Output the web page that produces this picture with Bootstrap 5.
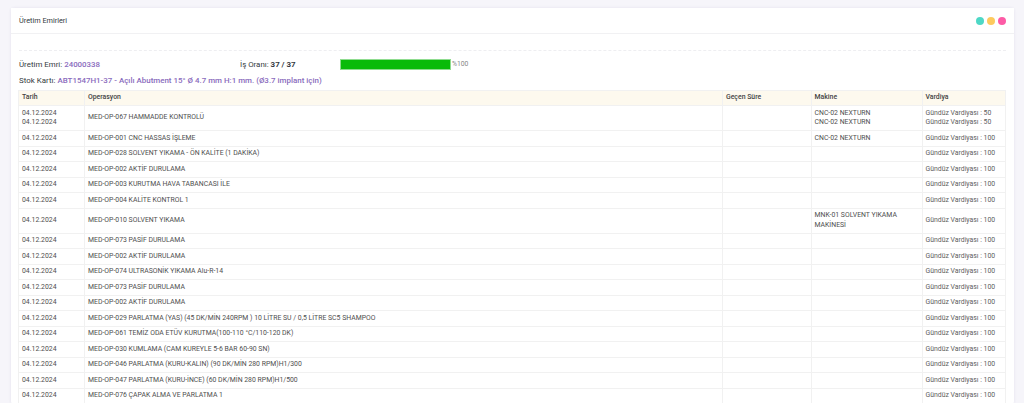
<!DOCTYPE html>
<html lang="tr"><head><meta charset="utf-8">
<link href="https://cdn.jsdelivr.net/npm/bootstrap@5.3.0/dist/css/bootstrap.min.css" rel="stylesheet">
<style>
html,body{height:403px;overflow:hidden}
body{background:#f6f5fa;font-family:Roboto,"Liberation Sans",sans-serif;font-size:7.4px;color:#212529;padding:8px 10px 0 11px}
.sheet{background:#fff;border:0;border-radius:3px;box-shadow:0 0 3px rgba(60,50,120,.10)}
.sheet-head{height:26px;padding:1px 8px 0;border-bottom:1px solid #f1f1f3;background:#fff;font-size:7.3px;color:#343a40}
.dot{width:8px;height:8px;border-radius:50%;display:block}
.dots{gap:3px}
.sheet-body{padding:16px 8px 0}
.dash{border-top:1px dashed #eeeef1;height:0;margin-bottom:5.5px}
.info{height:16px;font-size:7.9px;color:#343a40}
.info-a{width:221px}.info-b{width:100px}
.violet{color:#8a6bbd;font-weight:500}
.barbox{width:111px;height:11px;background:#0abb0a;border:1px solid #8fdc8f}
.pct{color:#888;font-size:6.8px;margin-left:1px}
.stok{height:17px;font-size:7.94px;color:#343a40}
.ops{table-layout:fixed;width:987.5px;border-collapse:collapse;margin:0 0 0 -1px;font-size:6.88px;line-height:9.5px;color:#4f4f4f}
.ops th,.ops td{border:1px solid #f1f1f1;padding:2.5px 3px;vertical-align:middle;background:#fff;color:#4f4f4f;box-shadow:none}
.ops th{background:#fdf9ee;font-weight:500;color:#444}
.w1{width:66px}.w2{width:638px}.w3{width:88.5px}.w4{width:111px}
.ops td.vard{color:#606060}
</style></head><body>
<div class="sheet">
  <div class="sheet-head d-flex align-items-center justify-content-between">
    <span>Üretim Emirleri</span>
    <span class="d-flex dots"><i class="dot" style="background:#4ed8c6"></i><i class="dot" style="background:#fdca5e"></i><i class="dot" style="background:#fd5ba6"></i></span>
  </div>
  <div class="sheet-body">
    <div class="dash"></div>
    <div class="info d-flex align-items-center">
      <div class="info-a">Üretim Emri: <span class="violet">24000338</span></div>
      <div class="info-b">İş Oranı: <b>37 / 37</b></div>
      <div class="d-flex align-items-center"><div class="barbox"></div><span class="pct">%100</span></div>
    </div>
    <div class="stok d-flex align-items-center"><div>Stok Kartı: <span class="violet">ABT1547H1-37 - Açılı Abutment 15° Ø 4.7 mm H:1 mm. (Ø3.7 implant için)</span></div></div>
    <table class="table ops">
      <thead><tr><th class="w1">Tarih</th><th class="w2">Operasyon</th><th class="w3">Geçen Süre</th><th class="w4">Makine</th><th>Vardiya</th></tr></thead>
      <tbody>
<tr><td>04.12.2024<br>04.12.2024</td><td>MED-OP-067 HAMMADDE KONTROLÜ</td><td></td><td>CNC-02 NEXTURN<br>CNC-02 NEXTURN</td><td class="vard">Gündüz Vardiyası : 50<br>Gündüz Vardiyası : 50</td></tr>
<tr><td>04.12.2024</td><td>MED-OP-001 CNC HASSAS İŞLEME</td><td></td><td>CNC-02 NEXTURN</td><td class="vard">Gündüz Vardiyası : 100</td></tr>
<tr><td>04.12.2024</td><td>MED-OP-028 SOLVENT YIKAMA - ÖN KALİTE (1 DAKİKA)</td><td></td><td></td><td class="vard">Gündüz Vardiyası : 100</td></tr>
<tr><td>04.12.2024</td><td>MED-OP-002 AKTİF DURULAMA</td><td></td><td></td><td class="vard">Gündüz Vardiyası : 100</td></tr>
<tr><td>04.12.2024</td><td>MED-OP-003 KURUTMA HAVA TABANCASI İLE</td><td></td><td></td><td class="vard">Gündüz Vardiyası : 100</td></tr>
<tr><td>04.12.2024</td><td>MED-OP-004 KALİTE KONTROL 1</td><td></td><td></td><td class="vard">Gündüz Vardiyası : 100</td></tr>
<tr><td>04.12.2024</td><td>MED-OP-010 SOLVENT YIKAMA</td><td></td><td>MNK-01 SOLVENT YIKAMA MAKİNESİ</td><td class="vard">Gündüz Vardiyası : 100</td></tr>
<tr><td>04.12.2024</td><td>MED-OP-073 PASİF DURULAMA</td><td></td><td></td><td class="vard">Gündüz Vardiyası : 100</td></tr>
<tr><td>04.12.2024</td><td>MED-OP-002 AKTİF DURULAMA</td><td></td><td></td><td class="vard">Gündüz Vardiyası : 100</td></tr>
<tr><td>04.12.2024</td><td>MED-OP-074 ULTRASONİK YIKAMA Alu-R-14</td><td></td><td></td><td class="vard">Gündüz Vardiyası : 100</td></tr>
<tr><td>04.12.2024</td><td>MED-OP-073 PASİF DURULAMA</td><td></td><td></td><td class="vard">Gündüz Vardiyası : 100</td></tr>
<tr><td>04.12.2024</td><td>MED-OP-002 AKTİF DURULAMA</td><td></td><td></td><td class="vard">Gündüz Vardiyası : 100</td></tr>
<tr><td>04.12.2024</td><td>MED-OP-029 PARLATMA (YAS) (45 DK/MİN 240RPM ) 10 LİTRE SU / 0,5 LİTRE SC5 SHAMPOO</td><td></td><td></td><td class="vard">Gündüz Vardiyası : 100</td></tr>
<tr><td>04.12.2024</td><td>MED-OP-061 TEMİZ ODA ETÜV KURUTMA(100-110 °C/110-120 DK)</td><td></td><td></td><td class="vard">Gündüz Vardiyası : 100</td></tr>
<tr><td>04.12.2024</td><td>MED-OP-030 KUMLAMA (CAM KUREYLE 5-6 BAR 60-90 SN)</td><td></td><td></td><td class="vard">Gündüz Vardiyası : 100</td></tr>
<tr><td>04.12.2024</td><td>MED-OP-046 PARLATMA (KURU-KALIN) (90 DK/MİN 280 RPM)H1/300</td><td></td><td></td><td class="vard">Gündüz Vardiyası : 100</td></tr>
<tr><td>04.12.2024</td><td>MED-OP-047 PARLATMA (KURU-İNCE) (60 DK/MİN 280 RPM)H1/500</td><td></td><td></td><td class="vard">Gündüz Vardiyası : 100</td></tr>
<tr><td>04.12.2024</td><td>MED-OP-076 ÇAPAK ALMA VE PARLATMA 1</td><td></td><td></td><td class="vard">Gündüz Vardiyası : 100</td></tr>
      </tbody>
    </table>
  </div>
</div>
</body></html>
